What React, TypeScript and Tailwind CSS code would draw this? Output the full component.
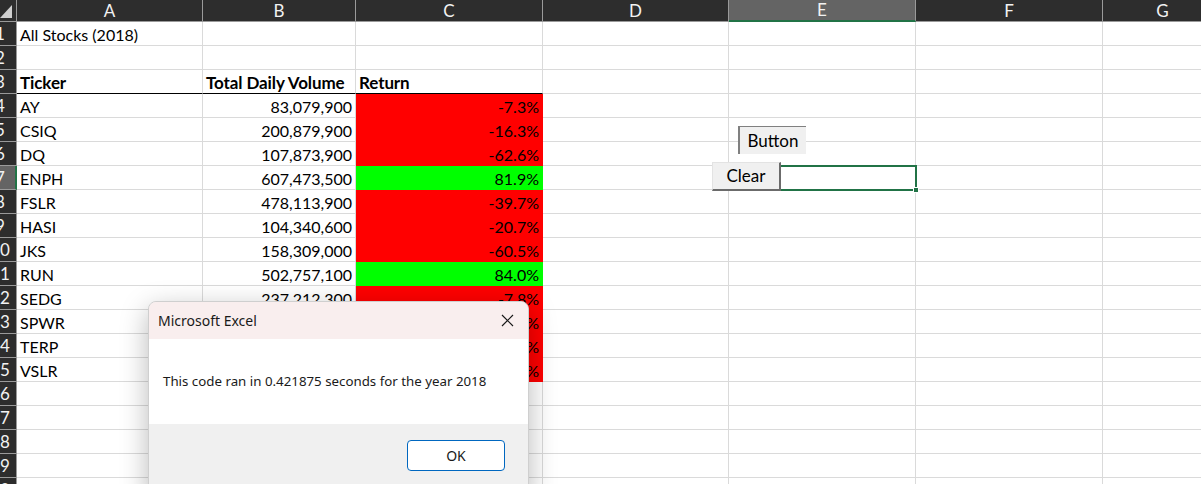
import React from 'react'

type Fill = 'red' | 'green' | undefined

interface RowData {
    a?: string
    b?: string
    c?: string
    fill?: Fill
    bold?: boolean
}

const cols = [
    { key: 'A', w: 'w-[186px]' },
    { key: 'B', w: 'w-[153px]' },
    { key: 'C', w: 'w-[187px]' },
    { key: 'D', w: 'w-[186px]' },
    { key: 'E', w: 'w-[187px]' },
    { key: 'F', w: 'w-[187px]' },
    { key: 'G', w: 'w-[120px]' },
]

const data: Record<number, RowData> = {
    1: { a: 'All Stocks (2018)' },
    3: { a: 'Ticker', b: 'Total Daily Volume', c: 'Return', bold: true },
    4: { a: 'AY', b: '83,079,900', c: '-7.3%', fill: 'red' },
    5: { a: 'CSIQ', b: '200,879,900', c: '-16.3%', fill: 'red' },
    6: { a: 'DQ', b: '107,873,900', c: '-62.6%', fill: 'red' },
    7: { a: 'ENPH', b: '607,473,500', c: '81.9%', fill: 'green' },
    8: { a: 'FSLR', b: '478,113,900', c: '-39.7%', fill: 'red' },
    9: { a: 'HASI', b: '104,340,600', c: '-20.7%', fill: 'red' },
    10: { a: 'JKS', b: '158,309,000', c: '-60.5%', fill: 'red' },
    11: { a: 'RUN', b: '502,757,100', c: '84.0%', fill: 'green' },
    12: { a: 'SEDG', b: '237,212,300', c: '-7.8%', fill: 'red' },
    13: { a: 'SPWR', b: '1,387,346,300', c: '-44.2%', fill: 'red' },
    14: { a: 'TERP', b: '59,340,200', c: '-5.0%', fill: 'red' },
    15: { a: 'VSLR', b: '93,701,200', c: '-3.5%', fill: 'red' },
}

const rows = Array.from({ length: 20 }, (_, i) => i + 1)

function RowHeader({ n }: { n: number }) {
    const active = n === 7
    return (
        <div
            className={`relative w-[17px] h-[24px] shrink-0 overflow-hidden border-b border-[#9a9a9a] ${
                active ? 'bg-[#646464] border-r-2 border-r-[#217346]' : 'bg-[#2d2d2d] border-r border-r-[#9a9a9a]'
            }`}
        >
            <div className="absolute left-[-16px] top-0 w-[32px] h-full flex items-center justify-center text-[17px] text-[#f2f2f2]">
                {n}
            </div>
        </div>
    )
}

function Cell({ col, row }: { col: string; row: number }) {
    const d = data[row]
    const w = cols.find((c) => c.key === col)!.w
    let text: string | undefined
    let right = false
    if (d) {
        if (col === 'A') text = d.a
        if (col === 'B') {
            text = d.b
            right = !d.bold
        }
        if (col === 'C') {
            text = d.c
            right = !d.bold
        }
    }
    const fill = col === 'C' ? d?.fill : undefined
    const headLine = row === 3 && ['A', 'B', 'C'].includes(col)

    let cls = 'border-r border-b border-[#dadada] bg-white'
    if (fill === 'red') cls = 'border-r border-b border-[#ff0000] bg-[#ff0000]'
    if (fill === 'green') cls = 'border-r border-b border-[#00ff00] bg-[#00ff00]'
    if (headLine) cls = 'border-r border-r-[#dadada] border-b border-b-black bg-white'

    return (
        <div
            className={`relative ${w} h-[24px] shrink-0 flex items-end px-[3px] whitespace-nowrap overflow-visible leading-[21px] text-black ${cls} ${
                right ? 'justify-end' : 'justify-start'
            } ${d?.bold ? 'font-bold text-[17px] tracking-[-0.1px]' : 'text-[16px]'}`}
        >
            {text}
            {col === 'E' && row === 7 && (
                <div className="absolute left-[-1px] top-[-1px] right-[-2px] bottom-[-2px] border-2 border-[#217346] z-10">
                    <div className="absolute right-[-4px] bottom-[-4px] w-[6px] h-[6px] bg-[#217346] border border-white" />
                </div>
            )}
        </div>
    )
}

export default function App() {
    return (
        <div
            className="relative w-[1201px] h-[484px] overflow-hidden bg-white select-none"
            style={{ fontFamily: 'Lato, "Noto Sans", sans-serif' }}
        >
            {/* column headers */}
            <div className="flex h-[22px]">
                <div className="relative w-[17px] shrink-0 bg-[#2d2d2d] border-r border-b border-[#9a9a9a]">
                    <svg className="absolute left-0 top-0" width="16" height="21" viewBox="0 0 16 21">
                        <polygon points="0,18 12,5 12,18" fill="#cfcfcf" />
                    </svg>
                </div>
                {cols.map((c) => (
                    <div
                        key={c.key}
                        className={`${c.w} shrink-0 flex items-center justify-center text-[17px] text-[#f2f2f2] border-r border-r-[#9a9a9a] ${
                            c.key === 'E'
                                ? 'bg-[#646464] border-b-2 border-b-[#217346]'
                                : 'bg-[#2d2d2d] border-b border-b-[#9a9a9a]'
                        }`}
                    >
                        {c.key}
                    </div>
                ))}
            </div>

            {/* grid rows */}
            {rows.map((r) => (
                <div key={r} className="flex">
                    <RowHeader n={r} />
                    {cols.map((c) => (
                        <Cell key={c.key} col={c.key} row={r} />
                    ))}
                </div>
            ))}

            {/* form buttons */}
            <div className="absolute left-[738px] top-[126px] w-[68px] h-[28px] bg-[#f0f0f0] border-l-2 border-t border-[#808080] flex items-center justify-center text-[17px] text-black z-20">
                Button
            </div>
            <div className="absolute left-[712px] top-[162px] w-[69px] h-[29px] bg-[#f0f0f0] border-t border-l border-t-[#e3e3e3] border-l-[#e3e3e3] border-r-2 border-b-2 border-r-[#6b6b6b] border-b-[#6b6b6b] flex items-center justify-center text-[17px] text-black z-20">
                Clear
            </div>

            {/* message box */}
            <div
                className="absolute left-[148px] top-[301px] w-[381px] h-[200px] rounded-lg overflow-hidden border border-[#cfcfcf] bg-[#f0f0f0] shadow-[0_8px_28px_rgba(0,0,0,0.28)] z-30"
                style={{ fontFamily: '"Noto Sans", "Open Sans", sans-serif' }}
            >
                <div className="h-[37px] bg-[#f9eeee] flex items-center justify-between pl-[9px] pr-[14px]">
                    <span className="text-[14px] text-[#1a1a1a]">Microsoft Excel</span>
                    <svg width="13" height="13" viewBox="0 0 13 13">
                        <path d="M1 1 L12 12 M12 1 L1 12" stroke="#1a1a1a" strokeWidth="1.2" />
                    </svg>
                </div>
                <div className="h-[85px] bg-white flex items-center pl-[14px] text-[13.3px] text-[#1a1a1a]">
                    This code ran in 0.421875 seconds for the year 2018
                </div>
                <div className="flex justify-end pr-[23px] pt-[16px]">
                    <div className="w-[98px] h-[31px] rounded-[4px] border border-[#0067c0] bg-white flex items-center justify-center text-[14px] text-[#1a1a1a]">
                        OK
                    </div>
                </div>
            </div>
        </div>
    )
}
